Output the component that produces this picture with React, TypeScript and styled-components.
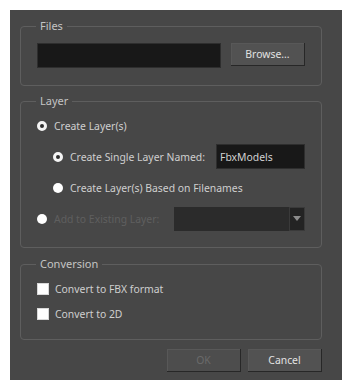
import styled, { createGlobalStyle } from "styled-components";

const GlobalStyle = createGlobalStyle`
  html, body {
    margin: 0;
    padding: 0;
    background: #ffffff;
  }
  body {
    font-family: "Noto Sans", "DejaVu Sans", sans-serif;
    font-size: 10.4px;
  }
`;

const App = () => {
  return (
    <>
      <GlobalStyle />
      <Dialog>
        <Group $padTop={10} $padBottom={17}>
          <Legend>Files</Legend>
          <FileRow>
            <TextField $width={184} />
            <Button $width={74}>Browse...</Button>
          </FileRow>
        </Group>

        <Group $gap={6} $top={8} $padTop={5} $padBottom={16}>
          <Legend>Layer</Legend>
          <OptionRow>
            <Radio $checked />
            <Label>Create Layer(s)</Label>
          </OptionRow>
          <OptionRow $indent>
            <Radio $checked />
            <Label>Create Single Layer Named:</Label>
            <Spacer />
            <TextField $width={89}>FbxModels</TextField>
          </OptionRow>
          <OptionRow $indent>
            <Radio />
            <Label>Create Layer(s) Based on Filenames</Label>
          </OptionRow>
          <OptionRow>
            <Radio />
            <Label $disabled>Add to Existing Layer:</Label>
            <Spacer />
            <Combo>
              <ComboArrow>
                <svg width="8" height="5" viewBox="0 0 8 5">
                  <path d="M0 0 H8 L4 5 Z" fill="#8c8c8c" />
                </svg>
              </ComboArrow>
            </Combo>
          </OptionRow>
        </Group>

        <Group $top={9} $padTop={5} $padBottom={13}>
          <Legend>Conversion</Legend>
          <CheckRow>
            <Checkbox />
            <Label>Convert to FBX format</Label>
          </CheckRow>
          <CheckRow>
            <Checkbox />
            <Label>Convert to 2D</Label>
          </CheckRow>
        </Group>

        <Footer>
          <Button $width={74} $disabled>OK</Button>
          <Button $width={74}>Cancel</Button>
        </Footer>
      </Dialog>
    </>
  );
};
export default App;

const Dialog = styled.div`
  margin: 10px;
  width: 332px;
  height: 370px;
  box-sizing: border-box;
  padding: 9px 20px 0 10px;
  background-color: #474747;
  display: flex;
  flex-direction: column;
`;

const Group = styled.fieldset<{ $gap?: number; $top?: number; $padTop: number; $padBottom: number }>`
  margin: ${({ $top }) => $top ?? 0}px 0 0 0;
  padding: ${({ $padTop }) => $padTop}px 16px ${({ $padBottom }) => $padBottom}px 16px;
  border: 1px solid #5e5e5e;
  border-radius: 4px;
  display: flex;
  flex-direction: column;
  gap: ${({ $gap }) => $gap ?? 0}px;
  min-width: 0;
  flex: none;
`;

const Legend = styled.legend`
  padding: 0 4px;
  margin-left: -1px;
  line-height: 14px;
  font-size: 11px;
  color: #c4c4c4;
`;

const FileRow = styled.div`
  display: flex;
  align-items: flex-start;
  gap: 10px;
`;

const TextField = styled.div<{ $width: number }>`
  width: ${({ $width }) => $width}px;
  height: 25px;
  box-sizing: border-box;
  background-color: #181818;
  border: 1px solid #2e2e2e;
  color: #d2d2d2;
  padding-left: 3px;
  display: flex;
  align-items: center;
`;

const Button = styled.div<{ $width: number; $disabled?: boolean }>`
  width: ${({ $width }) => $width}px;
  height: 23px;
  box-sizing: border-box;
  background-color: ${({ $disabled }) => ($disabled ? "#4d4d4d" : "#525252")};
  border-right: 1px solid #272727;
  border-bottom: 1px solid #272727;
  box-shadow: inset 1px 1px 0 #585858;
  color: ${({ $disabled }) => ($disabled ? "#6a6a6a" : "#e2e2e2")};
  display: flex;
  align-items: center;
  justify-content: center;
`;

const OptionRow = styled.div<{ $indent?: boolean }>`
  height: 25px;
  display: flex;
  align-items: center;
  padding-left: ${({ $indent }) => ($indent ? 16 : 0)}px;
`;

const Radio = styled.span<{ $checked?: boolean }>`
  width: 10px;
  height: 10px;
  box-sizing: border-box;
  border-radius: 50%;
  background-color: ${({ $checked }) => ($checked ? "#2e2e2e" : "#ffffff")};
  border: ${({ $checked }) => ($checked ? "3px solid #f4f4f4" : "none")};
  flex: none;
  margin-right: 7px;
`;

const Label = styled.span<{ $disabled?: boolean }>`
  color: ${({ $disabled }) => ($disabled ? "#5f5f5f" : "#cfcfcf")};
  white-space: nowrap;
`;

const Spacer = styled.div`
  flex: 1;
`;

const Combo = styled.div`
  width: 131px;
  height: 24px;
  box-sizing: border-box;
  background-color: #2b2b2b;
  display: flex;
  justify-content: flex-end;
`;

const ComboArrow = styled.div`
  width: 16px;
  height: 24px;
  box-sizing: border-box;
  background-color: #232323;
  border: 1px solid #3a3a3a;
  display: flex;
  align-items: center;
  justify-content: center;
`;

const CheckRow = styled.div`
  height: 25px;
  display: flex;
  align-items: center;
`;

const Checkbox = styled.span`
  width: 12px;
  height: 12px;
  box-sizing: border-box;
  background-color: #ffffff;
  border: 1px solid #d8d8d8;
  flex: none;
  margin-right: 6px;
`;

const Footer = styled.div`
  margin-top: 9px;
  display: flex;
  justify-content: flex-end;
  gap: 7px;
`;
